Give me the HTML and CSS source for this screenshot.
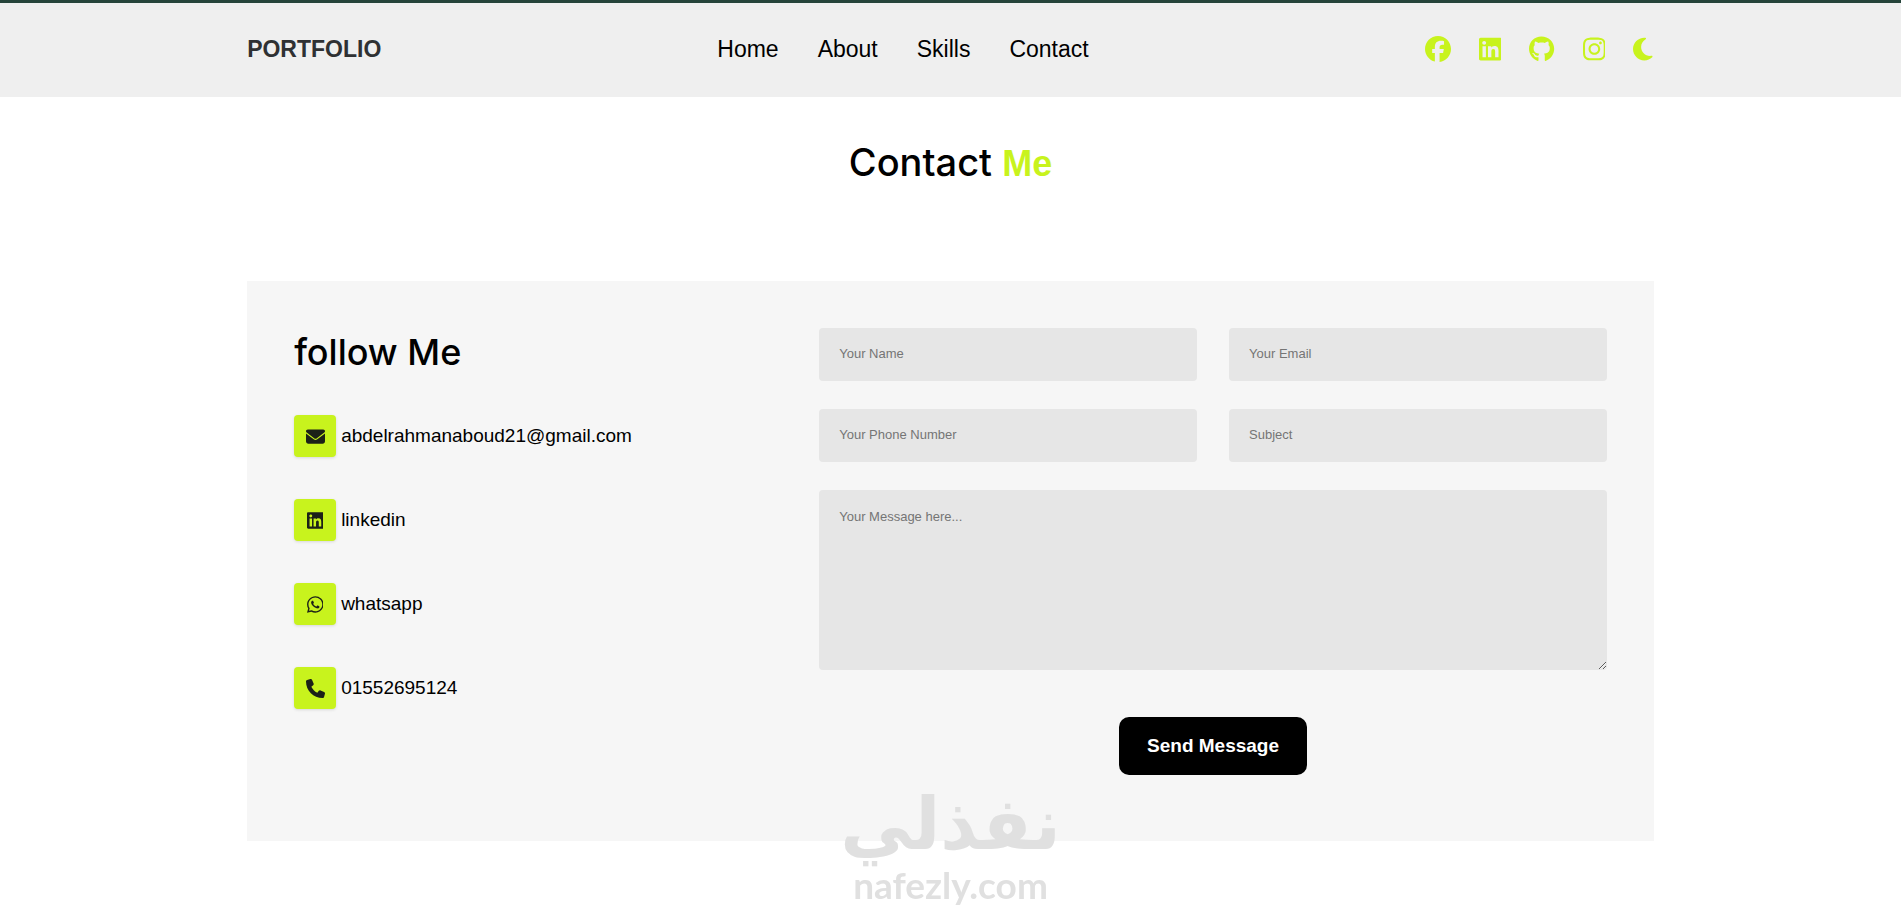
FILE: index.html
```html
<!DOCTYPE html>
<html lang="en">
<head>
<meta charset="utf-8">
<meta name="viewport" content="width=device-width, initial-scale=1">
<title>Portfolio - Contact</title>
<link rel="stylesheet" href="styles.css">
</head>
<body>
<header class="header">
  <a class="logo" href="#">PORTFOLIO</a>
  <nav class="nav">
    <a href="#home">Home</a>
    <a href="#about">About</a>
    <a href="#skills">Skills</a>
    <a href="#contact">Contact</a>
  </nav>
  <div class="social">
    <a href="#" aria-label="Facebook"><svg class="icon" viewBox="0 0 512 512"><path d="M512 256C512 114.6 397.4 0 256 0S0 114.6 0 256C0 376 82.7 476.8 194.2 504.5V334.2H141.4V256h52.8V222.3c0-87.1 39.4-127.5 125-127.5c16.2 0 44.2 3.2 55.7 6.4V172c-6-.6-16.5-1-29.6-1c-42 0-58.2 15.9-58.2 57.2V256h83.6l-14.4 78.2H287V510.1C413.8 494.8 512 386.9 512 256z"/></svg></a>
    <a href="#" aria-label="LinkedIn"><svg class="icon" viewBox="0 0 448 512"><path d="M416 32H31.9C14.3 32 0 46.5 0 64.3v383.4C0 465.5 14.3 480 31.9 480H416c17.6 0 32-14.5 32-32.3V64.3c0-17.8-14.4-32.3-32-32.3zM135.4 416H69V202.2h66.5V416zm-33.2-243c-21.3 0-38.5-17.3-38.5-38.5S80.9 96 102.2 96c21.2 0 38.5 17.3 38.5 38.5 0 21.3-17.2 38.5-38.5 38.5zm282.1 243h-66.4V312c0-24.8-.5-56.7-34.5-56.7-34.6 0-39.9 27-39.9 54.9V416h-66.4V202.2h63.7v29.2h.9c8.9-16.8 30.6-34.5 62.9-34.5 67.2 0 79.7 44.3 79.7 101.9V416z"/></svg></a>
    <a href="#" aria-label="GitHub"><svg class="icon" viewBox="0 0 496 512"><path d="M244.8 8C106.1 8 0 113.3 0 252c0 110.9 69.8 205.8 169.5 239.2 12.8 2.3 17.3-5.6 17.3-12.1 0-6.2-.3-40.4-.3-61.4 0 0-70 15-84.7-29.8 0 0-11.4-29.1-27.8-36.6 0 0-22.9-15.7 1.6-15.4 0 0 24.9 2 38.6 25.8 21.9 38.6 58.6 27.5 72.9 20.9 2.3-16 8.8-27.1 16-33.7-55.9-6.2-112.3-14.3-112.3-110.5 0-27.5 7.6-41.3 23.6-58.9-2.6-6.5-11.1-33.3 2.6-67.9 20.9-6.5 69 27 69 27 20-5.6 41.5-8.5 62.8-8.5s42.8 2.9 62.8 8.5c0 0 48.1-33.6 69-27 13.7 34.7 5.2 61.4 2.6 67.9 16 17.7 25.8 31.5 25.8 58.9 0 96.5-58.9 104.2-114.8 110.5 9.2 7.9 17 22.9 17 46.4 0 33.7-.3 75.4-.3 83.6 0 6.5 4.6 14.4 17.3 12.1C428.2 457.8 496 362.9 496 252 496 113.3 383.5 8 244.8 8z"/></svg></a>
    <a href="#" aria-label="Instagram"><svg class="icon" viewBox="0 0 448 512"><path d="M224.1 141c-63.6 0-114.9 51.3-114.9 114.9s51.3 114.9 114.9 114.9S339 319.5 339 255.9 287.7 141 224.1 141zm0 189.6c-41.1 0-74.7-33.5-74.7-74.7s33.5-74.7 74.7-74.7 74.7 33.5 74.7 74.7-33.6 74.7-74.7 74.7zm146.4-194.3c0 14.9-12 26.8-26.8 26.8-14.9 0-26.8-12-26.8-26.8s12-26.8 26.8-26.8 26.8 12 26.8 26.8zm76.1 27.2c-1.7-35.9-9.9-67.7-36.2-93.9-26.2-26.2-58-34.4-93.9-36.2-37-2.1-147.9-2.1-184.9 0-35.8 1.7-67.6 9.9-93.9 36.1s-34.4 58-36.2 93.9c-2.1 37-2.1 147.9 0 184.9 1.7 35.9 9.9 67.7 36.2 93.9s58 34.4 93.9 36.2c37 2.1 147.9 2.1 184.9 0 35.9-1.7 67.7-9.9 93.9-36.2 26.2-26.2 34.4-58 36.2-93.9 2.1-37 2.1-147.8 0-184.8zM398.8 388c-7.8 19.6-22.9 34.7-42.6 42.6-29.5 11.7-99.5 9-132.1 9s-102.7 2.6-132.1-9c-19.6-7.8-34.7-22.9-42.6-42.6-11.7-29.5-9-99.5-9-132.1s-2.6-102.7 9-132.1c7.8-19.6 22.9-34.7 42.6-42.6 29.5-11.7 99.5-9 132.1-9s102.7-2.6 132.1 9c19.6 7.8 34.7 22.9 42.6 42.6 11.7 29.5 9 99.5 9 132.1s2.7 102.7-9 132.1z"/></svg></a>
    <button class="theme" type="button" aria-label="Dark mode"><svg class="icon" viewBox="0 0 384 512"><path d="M223.5 32C100 32 0 132.3 0 256S100 480 223.5 480c60.6 0 115.5-24.2 155.8-63.4c5-4.9 6.3-12.5 3.1-18.7s-10.1-9.7-17-8.5c-9.8 1.7-19.8 2.6-30.1 2.6c-96.9 0-175.5-78.8-175.5-176c0-65.8 36-123.1 89.3-153.3c6.1-3.5 9.2-10.5 7.7-17.3s-7.3-11.9-14.3-12.5c-6.3-.5-12.6-.8-19-.8z"/></svg></button>
  </div>
</header>

<main class="contact" id="contact">
  <h1 class="title">Contact <span class="accent">Me</span></h1>
  <section class="panel">
    <div class="follow">
      <h2 class="subtitle">follow Me</h2>
      <ul class="links">
        <li><a class="link" href="mailto:abdelrahmanaboud21@gmail.com"><span class="tile"><svg class="glyph" viewBox="0 0 512 512"><path d="M48 64C21.5 64 0 85.5 0 112c0 15.1 7.1 29.3 19.2 38.4L236.8 313.6c11.4 8.5 27 8.5 38.4 0L492.8 150.4c12.1-9.1 19.2-23.3 19.2-38.4c0-26.5-21.5-48-48-48H48zM0 176V384c0 35.3 28.7 64 64 64H448c35.3 0 64-28.7 64-64V176L294.4 339.2c-22.8 17.1-54 17.1-76.8 0L0 176z"/></svg></span>abdelrahmanaboud21@gmail.com</a></li>
        <li><a class="link" href="#"><span class="tile"><svg class="glyph" viewBox="0 0 448 512"><path d="M416 32H31.9C14.3 32 0 46.5 0 64.3v383.4C0 465.5 14.3 480 31.9 480H416c17.6 0 32-14.5 32-32.3V64.3c0-17.8-14.4-32.3-32-32.3zM135.4 416H69V202.2h66.5V416zm-33.2-243c-21.3 0-38.5-17.3-38.5-38.5S80.9 96 102.2 96c21.2 0 38.5 17.3 38.5 38.5 0 21.3-17.2 38.5-38.5 38.5zm282.1 243h-66.4V312c0-24.8-.5-56.7-34.5-56.7-34.6 0-39.9 27-39.9 54.9V416h-66.4V202.2h63.7v29.2h.9c8.9-16.8 30.6-34.5 62.9-34.5 67.2 0 79.7 44.3 79.7 101.9V416z"/></svg></span>linkedin</a></li>
        <li><a class="link" href="#"><span class="tile"><svg class="glyph" viewBox="0 0 448 512"><path d="M380.9 97.1C339 55.1 283.2 32 223.9 32c-122.4 0-222 99.6-222 222 0 39.1 10.2 77.3 29.6 111L0 480l117.7-30.9c32.4 17.7 68.9 27 106.1 27h.1c122.3 0 224.1-99.6 224.1-222 0-59.3-25.2-115-67.1-157zm-157 341.6c-33.2 0-65.7-8.9-94-25.7l-6.7-4-69.8 18.3L72 359.2l-4.4-7c-18.5-29.4-28.2-63.3-28.2-98.2 0-101.7 82.8-184.5 184.6-184.5 49.3 0 95.6 19.2 130.4 54.1 34.8 34.9 56.2 81.2 56.1 130.5 0 101.8-84.9 184.6-186.6 184.6zm101.2-138.2c-5.5-2.8-32.8-16.2-37.9-18-5.1-1.9-8.8-2.8-12.5 2.8-3.7 5.6-14.3 18-17.6 21.8-3.2 3.7-6.5 4.2-12 1.4-32.6-16.3-54-29.1-75.5-66-5.7-9.8 5.7-9.1 16.3-30.3 1.8-3.7.9-6.9-.5-9.7-1.4-2.8-12.5-30.1-17.1-41.2-4.5-10.8-9.1-9.3-12.5-9.5-3.2-.2-6.9-.2-10.6-.2-3.7 0-9.7 1.4-14.8 6.9-5.1 5.6-19.4 19-19.4 46.3 0 27.3 19.9 53.7 22.6 57.4 2.8 3.7 39.1 59.7 94.8 83.8 35.2 15.2 49 16.5 66.6 13.9 10.7-1.6 32.8-13.4 37.4-26.4 4.6-13 4.6-24.1 3.2-26.4-1.3-2.5-5-3.9-10.5-6.6z"/></svg></span>whatsapp</a></li>
        <li><a class="link" href="tel:01552695124"><span class="tile"><svg class="glyph" viewBox="0 0 512 512"><path d="M164.9 24.6c-7.7-18.6-28-28.5-47.4-23.2l-88 24C12.1 30.2 0 46 0 64C0 311.4 200.6 512 448 512c18 0 33.8-12.1 38.6-29.5l24-88c5.3-19.4-4.6-39.7-23.2-47.4l-96-40c-16.3-6.8-35.2-2.1-46.3 11.6L304.7 368C234.3 334.7 177.3 277.7 144 207.3L193.3 167c13.7-11.2 18.4-30 11.6-46.3l-40-96z"/></svg></span>01552695124</a></li>
      </ul>
    </div>
    <form class="form">
      <input class="field" type="text" placeholder="Your Name" aria-label="Your Name">
      <input class="field" type="email" placeholder="Your Email" aria-label="Your Email">
      <input class="field" type="tel" placeholder="Your Phone Number" aria-label="Your Phone Number">
      <input class="field" type="text" placeholder="Subject" aria-label="Subject">
      <textarea class="field message" placeholder="Your Message here..." aria-label="Your Message"></textarea>
      <button class="send" type="submit">Send Message</button>
    </form>
  </section>
</main>

<div class="watermark">
  <span class="mark-ar" lang="ar" dir="rtl">نفذلي</span>
  <span class="mark-en">nafezly.com</span>
</div>
</body>
</html>
```
FILE: styles.css
```css
* {
  box-sizing: border-box;
  margin: 0;
  padding: 0;
}

body {
  background: #fff;
  color: #000;
  font-family: "Liberation Sans", Arial, sans-serif;
}

a {
  color: inherit;
  text-decoration: none;
}

.header {
  display: flex;
  align-items: center;
  justify-content: space-between;
  padding: 31px 13% 33px;
  border-top: 3px solid #26443a;
  background: #efefef;
}

.logo {
  color: #2f3133;
  font-size: 23px;
  font-weight: 700;
}

.nav {
  display: flex;
  gap: 39px;
  font-size: 23px;
  line-height: 30px;
}

.social {
  display: flex;
  align-items: center;
  gap: 28px;
  padding-right: 1px;
  color: #c8f31d;
}

.icon {
  display: block;
  height: 26px;
  fill: currentColor;
}

.theme {
  border: 0;
  background: none;
  color: inherit;
}

.contact {
  padding: 43px 13% 68px;
}

.title,
.subtitle {
  font-family: Inter, "Liberation Sans", sans-serif;
  font-size: 36px;
  font-weight: 500;
  line-height: 48px;
}

.title {
  margin-bottom: 95px;
  font-size: 38px;
  line-height: 44px;
  text-align: center;
}

.accent {
  color: #c8f31d;
  font-family: "Liberation Sans", Arial, sans-serif;
  font-size: 36px;
  font-weight: 700;
}

.panel {
  display: grid;
  grid-template-columns: 2fr 3fr;
  padding: 47px 47px 66px;
  background: #f6f6f6;
}

.subtitle {
  margin-bottom: 39px;
}

.links {
  display: grid;
  gap: 42px;
  list-style: none;
}

.link {
  display: inline-flex;
  align-items: center;
  gap: 5px;
  font-size: 19px;
}

.tile {
  display: grid;
  place-items: center;
  width: 42px;
  height: 42px;
  border-radius: 4px;
  background: #c8f31d;
  box-shadow: 0 1px 3px rgba(0, 0, 0, 0.12);
}

.glyph {
  height: 19px;
  fill: #1c2118;
}

.form {
  display: grid;
  grid-template-columns: 1fr 1fr;
  gap: 28px 32px;
}

.field {
  width: 100%;
  height: 53px;
  padding: 17px 20px 19px;
  border: 0;
  border-radius: 4px;
  background: #e6e6e6;
  font-family: inherit;
  font-size: 13px;
}

.field::placeholder {
  color: #757575;
}

.message {
  display: block;
  grid-column: 1 / -1;
  height: 180px;
  padding-top: 19px;
}

.send {
  grid-column: 1 / -1;
  justify-self: center;
  margin-top: 19px;
  padding: 18px 28px;
  border: 0;
  border-radius: 10px;
  background: #000;
  color: #fff;
  font-family: inherit;
  font-size: 19px;
  font-weight: 700;
  line-height: 22px;
}

.watermark {
  position: fixed;
  bottom: 1px;
  left: 50%;
  display: flex;
  flex-direction: column;
  align-items: center;
  color: #e0e0e0;
  font-weight: 700;
  pointer-events: none;
  transform: translateX(-50%);
}

.mark-ar {
  font-family: "DejaVu Sans", sans-serif;
  font-size: 72px;
  line-height: 78px;
}

.mark-en {
  font-family: Lato, sans-serif;
  font-size: 37px;
  line-height: 44px;
}
```
